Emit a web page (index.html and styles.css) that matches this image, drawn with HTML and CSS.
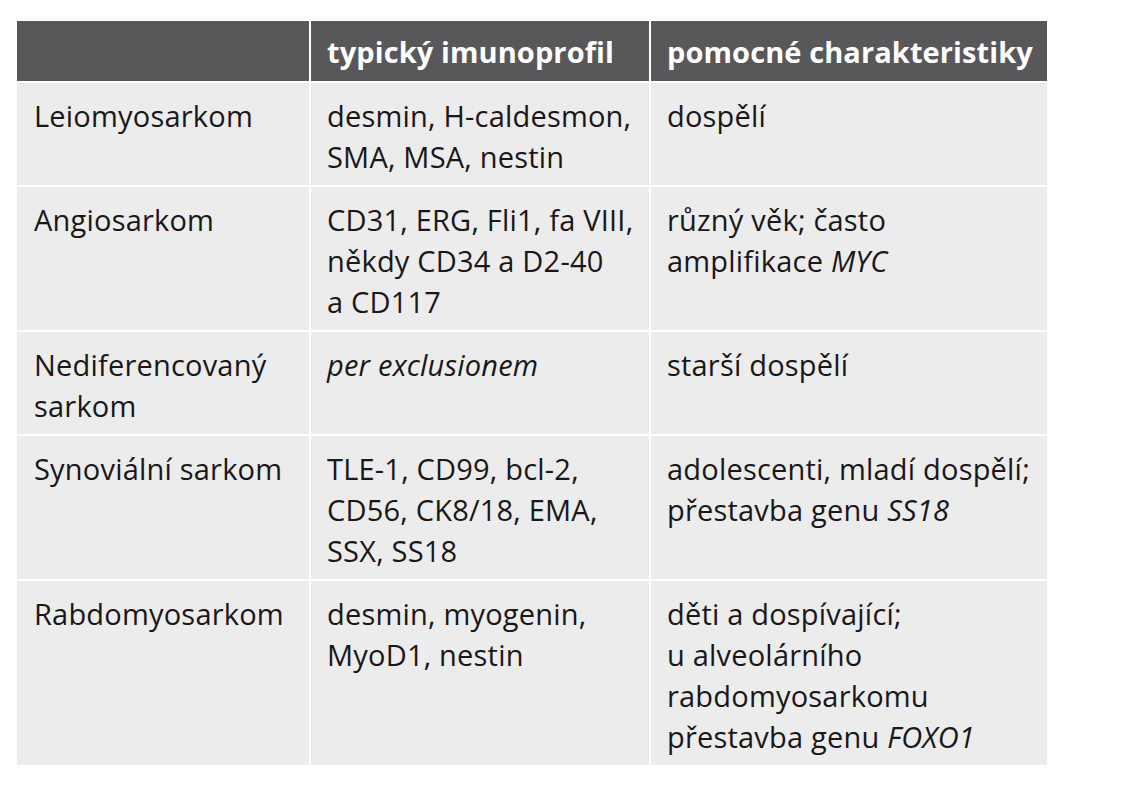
FILE: index.html
```html
<!DOCTYPE html>
<html lang="cs">
<head>
<meta charset="utf-8">
<title>Sarkomy – imunoprofil</title>
<link rel="stylesheet" href="styles.css">
</head>
<body>
<table class="sarc-table">
  <colgroup>
    <col class="c1">
    <col class="c2">
    <col class="c3">
  </colgroup>
  <thead>
    <tr>
      <th></th>
      <th>typický imunoprofil</th>
      <th>pomocné charakteristiky</th>
    </tr>
  </thead>
  <tbody>
    <tr>
      <td>Leiomyosarkom</td>
      <td>desmin, H-caldesmon,<br>SMA, MSA, nestin</td>
      <td>dospělí</td>
    </tr>
    <tr>
      <td>Angiosarkom</td>
      <td>CD31, ERG, Fli1, fa VIII,<br>někdy CD34 a D2-40<br>a CD117</td>
      <td>různý věk; často<br>amplifikace <i>MYC</i></td>
    </tr>
    <tr>
      <td>Nediferencovaný<br>sarkom</td>
      <td><i>per exclusionem</i></td>
      <td>starší dospělí</td>
    </tr>
    <tr>
      <td>Synoviální sarkom</td>
      <td>TLE-1, CD99, bcl-2,<br>CD56, CK8/18, EMA,<br>SSX, SS18</td>
      <td>adolescenti, mladí dospělí;<br>přestavba genu <i>SS18</i></td>
    </tr>
    <tr>
      <td>Rabdomyosarkom</td>
      <td>desmin, myogenin,<br>MyoD1, nestin</td>
      <td>děti a dospívající;<br>u alveolárního<br>rabdomyosarkomu<br>přestavba genu <i>FOXO1</i></td>
    </tr>
  </tbody>
</table>
</body>
</html>
```

FILE: styles.css
```css
html, body {
  margin: 0;
  padding: 0;
  background: #ffffff;
}

body {
  font-family: "Open Sans", "Noto Sans", "Liberation Sans", sans-serif;
  color: #1a1718;
}

.sarc-table {
  margin: 19px 0 0 15px;
  border-collapse: separate;
  border-spacing: 2px;
  table-layout: fixed;
  width: 1034px;
}

.sarc-table .c1 { width: 292px; }
.sarc-table .c2 { width: 338px; }
.sarc-table .c3 { width: 396px; }

.sarc-table th,
.sarc-table td {
  text-align: left;
  vertical-align: top;
  white-space: nowrap;
  font-size: 29px;
  line-height: 41px;
  letter-spacing: 0.2px;
  padding: 12px 10px 8px 16px;
}

.sarc-table th {
  background: #58585a;
  color: #ffffff;
  font-weight: 700;
  letter-spacing: 0.1px;
  height: 41px;
  padding-top: 10px;
  padding-bottom: 9px;
}

.sarc-table td {
  background: #ececec;
  font-weight: 400;
}

.sarc-table td:first-child {
  padding-left: 17px;
}

.sarc-table i {
  font-style: italic;
}
```
